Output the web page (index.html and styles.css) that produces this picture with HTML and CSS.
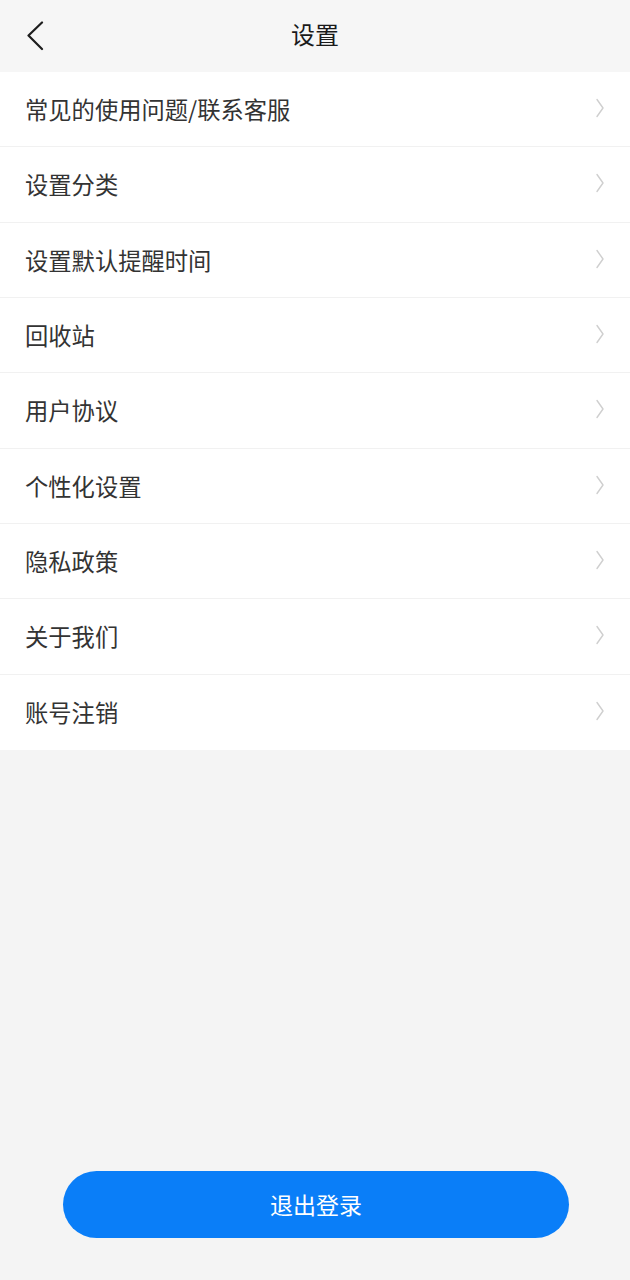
FILE: index.html
```html
<!DOCTYPE html>
<html lang="zh">
<head>
<meta charset="utf-8">
<link rel="stylesheet" href="styles.css">
</head>
<body>
<div class="page">
  <header class="topbar">
    <span class="back">
      <svg width="20" height="30" viewBox="0 0 20 30"><path d="M17 1.5 L3.5 14.5 L17 28" fill="none" stroke="#1e1e1e" stroke-width="2.2" stroke-linecap="round" stroke-linejoin="round"/></svg>
    </span>
    <h1 class="title">设置</h1>
  </header>
  <ul class="menu">
    <li class="item"><span>常见的使用问题/联系客服</span><svg class="chev" width="10" height="20" viewBox="0 0 10 20"><path d="M2 1.5 L8 10 L2 18.5" fill="none" stroke="#cfcfcf" stroke-width="1.4" stroke-linecap="round" stroke-linejoin="round"/></svg></li>
    <li class="item"><span>设置分类</span><svg class="chev" width="10" height="20" viewBox="0 0 10 20"><path d="M2 1.5 L8 10 L2 18.5" fill="none" stroke="#cfcfcf" stroke-width="1.4" stroke-linecap="round" stroke-linejoin="round"/></svg></li>
    <li class="item"><span>设置默认提醒时间</span><svg class="chev" width="10" height="20" viewBox="0 0 10 20"><path d="M2 1.5 L8 10 L2 18.5" fill="none" stroke="#cfcfcf" stroke-width="1.4" stroke-linecap="round" stroke-linejoin="round"/></svg></li>
    <li class="item"><span>回收站</span><svg class="chev" width="10" height="20" viewBox="0 0 10 20"><path d="M2 1.5 L8 10 L2 18.5" fill="none" stroke="#cfcfcf" stroke-width="1.4" stroke-linecap="round" stroke-linejoin="round"/></svg></li>
    <li class="item"><span>用户协议</span><svg class="chev" width="10" height="20" viewBox="0 0 10 20"><path d="M2 1.5 L8 10 L2 18.5" fill="none" stroke="#cfcfcf" stroke-width="1.4" stroke-linecap="round" stroke-linejoin="round"/></svg></li>
    <li class="item"><span>个性化设置</span><svg class="chev" width="10" height="20" viewBox="0 0 10 20"><path d="M2 1.5 L8 10 L2 18.5" fill="none" stroke="#cfcfcf" stroke-width="1.4" stroke-linecap="round" stroke-linejoin="round"/></svg></li>
    <li class="item"><span>隐私政策</span><svg class="chev" width="10" height="20" viewBox="0 0 10 20"><path d="M2 1.5 L8 10 L2 18.5" fill="none" stroke="#cfcfcf" stroke-width="1.4" stroke-linecap="round" stroke-linejoin="round"/></svg></li>
    <li class="item"><span>关于我们</span><svg class="chev" width="10" height="20" viewBox="0 0 10 20"><path d="M2 1.5 L8 10 L2 18.5" fill="none" stroke="#cfcfcf" stroke-width="1.4" stroke-linecap="round" stroke-linejoin="round"/></svg></li>
    <li class="item"><span>账号注销</span><svg class="chev" width="10" height="20" viewBox="0 0 10 20"><path d="M2 1.5 L8 10 L2 18.5" fill="none" stroke="#cfcfcf" stroke-width="1.4" stroke-linecap="round" stroke-linejoin="round"/></svg></li>
  </ul>
  <div class="spacer"></div>
  <div class="footer">
    <button class="logout">退出登录</button>
  </div>
</div>
</body>
</html>
```
FILE: styles.css
```css
* { box-sizing: border-box; }
html, body { margin: 0; padding: 0; }
body {
  background: #f4f4f4;
  font-family: "Noto Sans CJK SC", "Noto Sans", sans-serif;
}
.page {
  width: 630px;
  height: 1280px;
  display: flex;
  flex-direction: column;
}
.topbar {
  height: 72px;
  padding-bottom: 4px;
  background: #f6f6f6;
  display: flex;
  align-items: center;
  justify-content: center;
  position: relative;
}
.back {
  position: absolute;
  left: 25px;
  top: 21px;
  width: 20px;
  height: 30px;
  display: block;
}
.back svg { display: block; }
.title {
  margin: 0;
  font-size: 24px;
  font-weight: 400;
  color: #1a1a1a;
  line-height: 1;
}
.menu {
  list-style: none;
  margin: 0;
  padding: 0;
  background: #fff;
}
.item {
  height: 75.33px;
  display: flex;
  align-items: center;
  justify-content: space-between;
  padding: 0 25px 0 25px;
  font-size: 23.3px;
  color: #333;
  border-bottom: 1px solid #f1f1f1;
}
.item:last-child { border-bottom: none; }
.chev {
  display: block;
  width: 10px;
  height: 20px;
  margin-top: -2px;
}
.spacer { flex: 1; }
.footer {
  padding: 0 61px 42px 63px;
}
.logout {
  width: 100%;
  height: 67px;
  border: none;
  border-radius: 34px;
  background: #0a7ef8;
  color: #fff;
  font-family: "Noto Sans CJK SC", "Noto Sans", sans-serif;
  font-size: 23px;
  padding-bottom: 2px;
  display: block;
}
```
